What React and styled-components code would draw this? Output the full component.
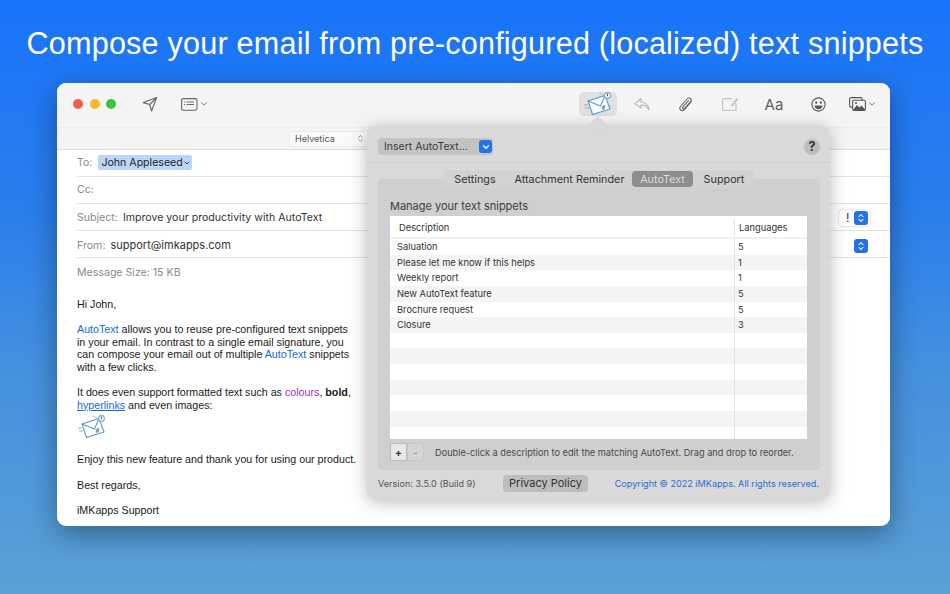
import React from "react";
import styled, { createGlobalStyle } from "styled-components";
import { ChevronDown, ChevronsUpDown } from "lucide-react";

const Global = createGlobalStyle`
  html, body { margin: 0; padding: 0; }
  body { width: 950px; height: 594px; overflow: hidden; font-family: "Liberation Sans", Arial, sans-serif; }
`;

const Page = styled.div`
  width: 950px; height: 594px; position: relative; overflow: hidden; box-sizing: border-box;
  padding-top: 25px;
  background: linear-gradient(180deg, #1874fa 0%, #2a7eec 35%, #4590df 62%, #5aa1d5 100%);
`;
const Headline = styled.h1`
  margin: 0; text-align: center; color: #fff;
  font: 400 30.6px/37px "Liberation Sans", sans-serif; letter-spacing: 0.2px; white-space: nowrap;
`;
const Window = styled.div`
  position: relative; margin: 21px 0 0 57px; width: 833px; height: 443px; border-radius: 9px;
  background: #fff; box-shadow: 0 8px 28px rgba(0,0,0,.38); overflow: hidden;
`;
const Toolbar = styled.div`
  height: 44px; background: #f4f4f4; display: flex; align-items: center; padding: 0 13px 2px 16px; box-sizing: border-box;
`;
const Lights = styled.div`display: flex; gap: 6.6px; margin-right: 20px;`;
const Light = styled.span`width: 10px; height: 10px; border-radius: 50%; background: ${p => p.$c};`;
const Tool = styled.div`
  width: ${p => p.$w || 44}px; height: 24px; display: flex; align-items: center; justify-content: ${p => p.$end ? "flex-end" : "center"}; flex: none; gap: ${p => p.$gap || 0}px;
  color: #5e5e5e; font: 400 15px "Inter", sans-serif; border-radius: 5px;
  background: ${p => p.$on ? "#e0e0e0" : "transparent"};
  margin-right: ${p => p.$mr || 0}px;
`;
const Spacer = styled.div`flex: 1;`;
const FormatBar = styled.div`
  height: 23px; background: #f4f4f4; border-top: 1px solid #ececec; border-bottom: 1px solid #dedede; box-sizing: border-box;
  display: flex; align-items: center; padding-left: 233px;
`;
const FontSelect = styled.div`
  width: 80px; height: 14px; background: #f9f9f9; border-radius: 3px; box-shadow: 0 0 0 1px #ebebeb; padding: 0 5px; box-sizing: border-box;
  font: 400 9px/14px "Inter", sans-serif; color: #555; display: flex; align-items: center; justify-content: space-between;
`;
const Fields = styled.div`padding-left: 20px;`;
const Field = styled.div`
  height: 27px; border-bottom: ${p => p.$last ? "none" : "1px solid #e4e4e4"}; box-sizing: border-box; padding: ${p => p.$pad || "0"};
  display: flex; align-items: center; gap: 5px; font: 400 10.6px "Inter", sans-serif; color: #333; position: relative;
`;
const Label = styled.span`color: #8a8a8a;`;
const Token = styled.span`
  background: #bcd6fb; border-radius: 2px; height: 15px; padding: 0 1px 0 3px; display: inline-flex; align-items: center; color: #222; margin-left: 1px;
`;
const Email = styled.span`font-size: 11px; margin-top: 2px;`;
const FromLabel = styled(Label)`margin-top: 2px;`;
const Stepper = styled.span`
  position: absolute; right: 22px; top: ${p => p.$t}px; width: 14px; height: 14px; background: #2472ea; border-radius: 3px; color: #fff;
  display: flex; align-items: center; justify-content: center;
`;
const Priority = styled.span`
  position: absolute; right: 20px; top: 6px; width: 31px; height: 16px; background: #fff; border-radius: 4px;
  box-shadow: 0 0 2px rgba(0,0,0,.3); font: 400 12px/16px "Inter", sans-serif; color: #333; padding-left: 7px; box-sizing: border-box;
`;
const Body = styled.div`
  padding: 13px 0 0 20px; width: 282px; font: 400 10.7px/12.6px "Liberation Sans", sans-serif; color: #1a1a1a;
  p { margin: 0 0 12.6px; }
`;
const Blue = styled.span`color: #1768d8;`;
const Purple = styled.span`color: #a32fc4;`;
const Linked = styled.span`color: #1768d8; text-decoration: underline;`;
const Picture = styled.div`height: 42px; margin-top: -12.6px; padding-top: 4px; box-sizing: border-box;`;

const Popover = styled.div`
  position: absolute; left: 367px; top: 126px; width: 463px; height: 373px; background: #d9d9d9; border-radius: 9px;
  box-shadow: 0 3px 18px rgba(0,0,0,.28); box-sizing: border-box; display: flex; flex-direction: column;
`;
const Arrow = styled.div`
  position: absolute; left: 222px; top: -9px; width: 18px; height: 18px; background: #d9d9d9; transform: rotate(45deg) scale(.8); border-radius: 2px 0 0 0;
`;
const PopHead = styled.div`
  height: 37px; border-bottom: 1px solid #cdcdcd; box-sizing: border-box; display: flex; align-items: center; justify-content: space-between; padding: 5px 10px 0 11px; position: relative;
`;
const Insert = styled.div`
  width: 115px; height: 17px; background: #c3c3c3; border-radius: 4px; display: flex; align-items: center; justify-content: space-between;
  font: 400 10.5px "Inter", sans-serif; color: #3a3a3a; padding: 0 1px 0 6px; box-sizing: border-box;
`;
const BlueDrop = styled.span`
  width: 13px; height: 13px; background: #2472ea; border-radius: 3px; color: #fff; display: flex; align-items: center; justify-content: center;
`;
const Help = styled.div`
  width: 16px; height: 16px; border-radius: 50%; background: #bdbdbd; color: #333; font: 700 12.5px/16px "Inter", sans-serif; text-align: center;
`;
const Panel = styled.div`
  position: relative; margin: 16px 10px 0 11px; height: 291px; background: #cfcfcf; border-radius: 4px; padding: 20px 12px 0 12px; box-sizing: border-box;
`;
const Tabs = styled.div`
  position: absolute; left: 65px; top: -9px; height: 18px; width: 312px; background: #d2d2d2; border-radius: 4px; display: flex; align-items: center;
  font: 400 10.8px "Inter", sans-serif; color: #333;
`;
const Tab = styled.div`
  width: ${p => p.$w}px; height: 16px; line-height: 17.5px; text-align: center; border-radius: 4px;
  background: ${p => p.$on ? "#8d8d8d" : "transparent"}; color: ${p => p.$on ? "#dcdcdc" : "#333"};
`;
const PanelTitle = styled.div`font: 400 11px/14px "Inter", sans-serif; color: #3c3c3c; margin-bottom: 3px;`;
const Table = styled.div`width: 417px; height: 223px; background: #fff; overflow: hidden;`;
const THead = styled.div`
  height: 23px; border-bottom: 2px solid #f1f1f1; box-sizing: border-box; display: grid; grid-template-columns: 344px 1fr; align-items: center;
  font: 400 9.3px "Inter", sans-serif; color: #333; padding-top: 2px;
`;
const HeadCell = styled.div`
  padding-left: ${p => p.$p}px; height: 15px; line-height: 15px; border-left: ${p => p.$div ? "1px solid #e2e2e2" : "none"};
`;
const Row = styled.div`
  height: 15.65px; display: grid; grid-template-columns: 344px 1fr; background: ${p => p.$alt ? "#f4f4f4" : "#fff"};
  font: 400 9.3px/16.4px "Inter", sans-serif; color: #333;
`;
const Cell = styled.div`
  padding-left: ${p => p.$p}px; border-left: ${p => p.$div ? "1px solid #e2e2e2" : "none"}; white-space: nowrap;
`;
const Controls = styled.div`
  display: flex; align-items: center; height: 26px; font: 400 9.2px "Inter", sans-serif; color: #4a4a4a;
`;
const SmallBtn = styled.div`
  width: 17px; height: 18px; background: ${p => p.$off ? "#d4d4d4" : "#e8e8e8"}; color: ${p => p.$off ? "#a0a0a0" : "#333"};
  border: 1px solid ${p => p.$off ? "#c8c8c8" : "#bcbcbc"}; box-sizing: border-box; text-align: center; font: 700 10px/16px "Inter", sans-serif;
`;
const Hint = styled.span`margin-left: 11px; white-space: nowrap;`;
const Footer = styled.div`
  display: flex; align-items: center; height: 27px; padding: 0 11px; font: 400 9.1px "Inter", sans-serif; color: #555;
`;
const Version = styled.span`width: 125px;`;
const Privacy = styled.div`
  width: 85px; height: 17px; background: #bdbdbd; border-radius: 4px; text-align: center; font: 400 11px/17px "Inter", sans-serif; color: #333;
`;
const Copy = styled.span`margin-left: auto; color: #2a6fd0; white-space: nowrap;`;

const MailIcon = () => (
  <svg width="30" height="24" viewBox="0 0 30 24" fill="none" stroke="#5b9bd0" strokeWidth="1.1">
    <path d="M5 9 L22 3.5 L27 17 L9.5 22.5 Z" fill="#fbfdff" />
    <path d="M5 9 L17.5 14 L22 3.5" />
    <path d="M1 13h4M2 16h4" stroke="#a8a8a8" />
    <circle cx="24.5" cy="3.5" r="2.9" fill="#fff" stroke="#7da7c7" />
    <path d="M24.5 1.8v2.4" stroke="#555" />
    <ellipse cx="20.5" cy="15.5" rx="1.6" ry="2.5" fill="#999" stroke="none" transform="rotate(25 20.5 15.5)" />
    <path d="M18 2.5l2 .4M16 1l2 .5" stroke="#a9c7de" />
  </svg>
);

const Plane = () => (
  <svg width="16" height="16" viewBox="0 0 16 16" fill="none" stroke="#666" strokeWidth="1.1" strokeLinejoin="round">
    <path d="M1.2 6.6 L14.6 1.5 L9.6 15 L7.7 8.5 Z M7.7 8.5 L14.6 1.5" />
  </svg>
);
const ListCard = () => (
  <svg width="17" height="13" viewBox="0 0 17 13" fill="none" stroke="#666" strokeWidth="1.1">
    <rect x=".6" y=".6" width="15.4" height="11.6" rx="1.6" />
    <path d="M3 4h1M5.5 4H13M3 6.5h1M5.5 6.5H13" />
  </svg>
);
const ReplyIcon = () => (
  <svg width="16" height="13" viewBox="0 0 16 13" fill="none" stroke="#bcbcbc" strokeWidth="1.2" strokeLinejoin="round">
    <path d="M7 .8 L.9 5.8 L7 10 V7.2 C10.5 7 13 8.2 15 12 C14.8 7.5 11.5 4.2 7 4 Z" />
  </svg>
);
const Clip = () => (
  <svg width="14" height="15" viewBox="0 0 14 15" fill="none" stroke="#666" strokeWidth="1.1" strokeLinecap="round">
    <path d="M12.4 4.4 L5.6 12.4 C4.3 13.9 2.6 14 1.5 13 C.5 12 .7 10.3 1.8 9 L8 2 C9 .8 10.5.6 11.5 1.5 C12.5 2.4 12.3 3.8 11.4 4.9 L5.6 11.4 C5 12 4.2 12 3.8 11.6 C3.3 11.1 3.4 10.4 4 9.7 L9.4 3.7" />
  </svg>
);
const Note = () => (
  <svg width="17" height="14" viewBox="0 0 17 14" fill="none" stroke="#c4c4c4" strokeWidth="1.2">
    <path d="M14 6V12.4a1 1 0 0 1-1 1H1.6a1 1 0 0 1-1-1V2.6a1 1 0 0 1 1-1H10" />
    <path d="M8.5 8.5 L14.8 1 L16.2 2.4 L10.4 9.4 Z" fill="#c4c4c4" stroke="none" />
  </svg>
);
const Smile = () => (
  <svg width="15" height="15" viewBox="0 0 15 15" fill="none" stroke="#5a5a5a" strokeWidth="1.1">
    <circle cx="7.5" cy="7.5" r="6.6" />
    <ellipse cx="5.2" cy="5.6" rx="1" ry="1.3" fill="#5a5a5a" stroke="none" />
    <ellipse cx="9.8" cy="5.6" rx="1" ry="1.3" fill="#5a5a5a" stroke="none" />
    <path d="M3.5 8.6h8c0 2.4-1.8 3.6-4 3.6s-4-1.2-4-3.6Z" fill="#5a5a5a" stroke="none" />
  </svg>
);
const Photos = () => (
  <svg width="17" height="14" viewBox="0 0 17 14" fill="none" stroke="#555" strokeWidth="1.1">
    <rect x=".6" y=".6" width="12.5" height="9.5" rx="1.5" />
    <rect x="3.6" y="3.2" width="12.8" height="10.2" rx="1.5" fill="#f4f4f4" />
    <path d="M4 13 L8 8 L10.5 10.5 L12.5 8.5 L16 12.5 V13.4 H4 Z" fill="#555" stroke="none" />
    <circle cx="7" cy="6" r="1" fill="#555" stroke="none" />
  </svg>
);

const rows = [
  ["Saluation", "5"],
  ["Please let me know if this helps", "1"],
  ["Weekly report", "1"],
  ["New AutoText feature", "5"],
  ["Brochure request", "5"],
  ["Closure", "3"],
  ...Array.from({ length: 7 }, () => ["", ""]),
];

export default function App() {
  return (
    <Page>
      <Global />
      <Headline>Compose your email from pre-configured (localized) text snippets</Headline>
      <Window>
        <Toolbar>
          <Lights>
            <Light $c="#f25b56" /><Light $c="#f7b731" /><Light $c="#3ec245" />
          </Lights>
          <Tool $w={28}><Plane /></Tool>
          <Tool $w={62} $gap={1}><ListCard /><ChevronDown size={10} strokeWidth={2} /></Tool>
          <Spacer />
          <Tool $w={38} $on $mr={3}><MailIcon /></Tool>
          <Tool><ReplyIcon /></Tool>
          <Tool><Clip /></Tool>
          <Tool><Note /></Tool>
          <Tool>Aa</Tool>
          <Tool><Smile /></Tool>
          <Tool $w={37} $end $gap={1}><Photos /><ChevronDown size={10} strokeWidth={2} /></Tool>
        </Toolbar>
        <FormatBar>
          <FontSelect>Helvetica<ChevronsUpDown size={9} strokeWidth={1.5} /></FontSelect>
        </FormatBar>
        <Fields>
          <Field $pad="0 0 1px">
            <Label>To:</Label>
            <Token>John Appleseed<ChevronDown size={8} strokeWidth={2.5} /></Token>
          </Field>
          <Field $pad="0 0 1px"><Label>Cc:</Label></Field>
          <Field>
            <Label>Subject:</Label>
            <span>Improve your productivity with AutoText</span>
            <Priority>!</Priority>
            <Stepper $t={7}><ChevronsUpDown size={10} strokeWidth={2.5} /></Stepper>
          </Field>
          <Field>
            <FromLabel>From:</FromLabel>
            <Email>support@imkapps.com</Email>
            <Stepper $t={8}><ChevronsUpDown size={10} strokeWidth={2.5} /></Stepper>
          </Field>
          <Field $last $pad="2px 0 0"><Label>Message Size: 15 KB</Label></Field>
        </Fields>
        <Body>
          <p>Hi John,</p>
          <p><Blue>AutoText</Blue> allows you to reuse pre-configured text snippets in your email. In contrast to a single email signature, you can compose your email out of multiple <Blue>AutoText</Blue> snippets with a few clicks.</p>
          <p>It does even support formatted text such as <Purple>colours</Purple>, <b>bold</b>, <Linked>hyperlinks</Linked> and even images:</p>
          <Picture><MailIcon /></Picture>
          <p>Enjoy this new feature and thank you for using our product.</p>
          <p>Best regards,</p>
          <p>iMKapps Support</p>
        </Body>
      </Window>
      <Popover>
        <Arrow />
        <PopHead>
          <Insert>Insert AutoText...<BlueDrop><ChevronDown size={10} strokeWidth={3} /></BlueDrop></Insert>
          <Help>?</Help>
        </PopHead>
        <Panel>
          <Tabs>
            <Tab $w={64}>Settings</Tab>
            <Tab $w={125}>Attachment Reminder</Tab>
            <Tab $w={61} $on>AutoText</Tab>
            <Tab $w={62}>Support</Tab>
          </Tabs>
          <PanelTitle>Manage your text snippets</PanelTitle>
          <Table>
            <THead>
              <HeadCell $p={9}>Description</HeadCell>
              <HeadCell $p={4} $div>Languages</HeadCell>
            </THead>
            {rows.map((r, i) => (
              <Row key={i} $alt={i % 2 === 1}>
                <Cell $p={7}>{r[0]}</Cell>
                <Cell $p={3} $div>{r[1]}</Cell>
              </Row>
            ))}
          </Table>
          <Controls>
            <SmallBtn>+</SmallBtn>
            <SmallBtn $off>-</SmallBtn>
            <Hint>Double-click a description to edit the matching AutoText. Drag and drop to reorder.</Hint>
          </Controls>
        </Panel>
        <Footer>
          <Version>Version: 3.5.0 (Build 9)</Version>
          <Privacy>Privacy Policy</Privacy>
          <Copy>Copyright © 2022 iMKapps. All rights reserved.</Copy>
        </Footer>
      </Popover>
    </Page>
  );
}
